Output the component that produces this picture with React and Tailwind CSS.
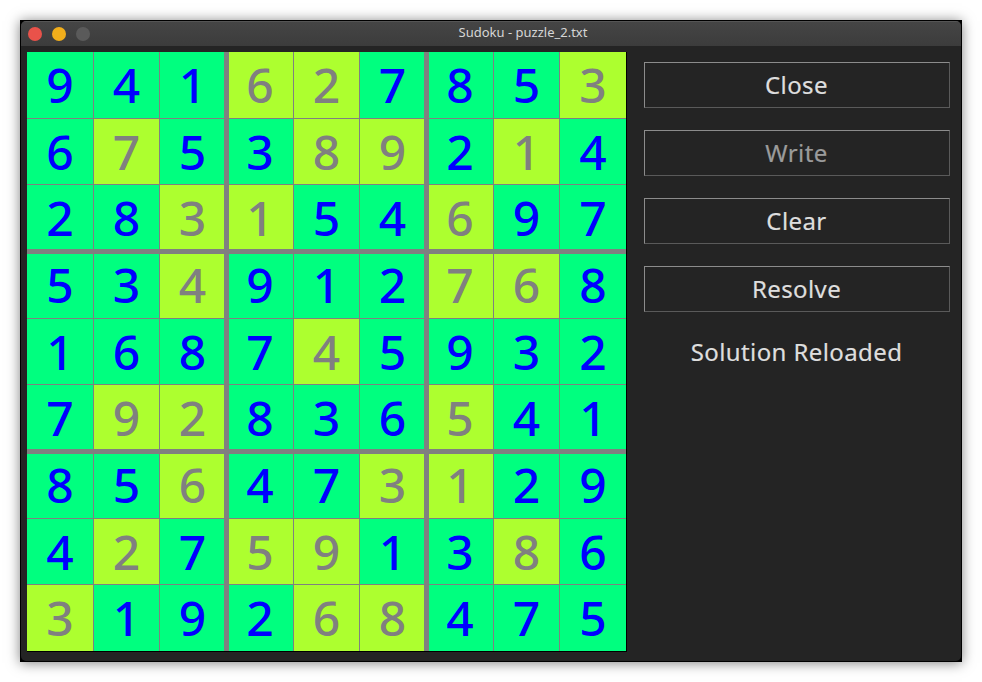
const ROWS = [
  ["941627853", "...ww...w"],
  ["675389214", ".w..ww.w."],
  ["283154697", "..ww..w.."],
  ["534912768", "..w...ww."],
  ["168745932", "....w...."],
  ["792836541", ".ww...w.."],
  ["856473129", "..w..ww.."],
  ["427591386", ".w.ww..w."],
  ["319268475", "w...ww..."],
];

const RIGHT = ["border-r", "border-r", "border-r-5 pl-px", "border-r pr-[2px]", "border-r", "border-r-5 pl-px", "border-r pr-[2px]", "border-r", ""];
const BOTTOM = ["border-b", "border-b", "border-b-5 pt-[2px]", "border-b pb-[2px]", "border-b", "border-b-5 pt-[2px]", "border-b pb-[2px]", "border-b", ""];

function Cell({ digit, solved, row, col }) {
  const tone = solved ? "bg-[#adff2f] text-[#808080]" : "bg-[#00ff7f] text-[#0000ff]";
  return (
    <div className={`flex items-center justify-center border-[#808080] text-[48px] leading-none font-medium ${tone} ${RIGHT[col]} ${BOTTOM[row]}`}>
      <span>{digit}</span>
    </div>
  );
}

function Action({ label, disabled }) {
  return (
    <button
      className={`flex h-[46px] w-full items-center justify-center border border-t-[#8c8c8c] border-r-[#5a5a5a] border-b-[#5a5a5a] border-l-[#8c8c8c] pr-px text-[24px] leading-none tracking-[0.4px] [-webkit-text-stroke-width:0.2px] ${disabled ? "text-[#9b9b9b]" : "text-[#dedede]"}`}
    >
      {label}
    </button>
  );
}

export default function App() {
  return (
    <div className="h-[682px] w-[982px] overflow-hidden bg-white p-5 font-['Noto_Sans',sans-serif]">
      <div className="h-[642px] w-[942px] bg-black p-px shadow-[0_1px_12px_rgba(0,0,0,0.5)]">
        <div className="flex h-[640px] w-[940px] flex-col overflow-hidden rounded-[5px] bg-[#242424]">
          <header className="flex h-[25px] shrink-0 items-center border-t border-[#555555] bg-linear-to-b from-[#454545] to-[#3c3c3c]">
            <div className="flex w-[90px] gap-2.5 pl-[7px]">
              <i className="size-3.5 rounded-full bg-[#e9524a]" />
              <i className="size-3.5 rounded-full bg-[#f1ae1b]" />
              <i className="size-3.5 rounded-full bg-[#5a5a5a]" />
            </div>
            <div className="flex-1 pr-[26px] pb-[3px] text-center text-[13px] leading-none text-[#d6d6d6]">Sudoku - puzzle_2.txt</div>
          </header>
          <main className="flex pt-1.5 pl-1.5">
            <div className="grid h-[600px] w-[600px] grid-cols-[67px_66px_69px_65px_66px_69px_65px_66px_66px] grid-rows-[67px_66px_69px_65px_66px_69px_65px_66px_66px] border-r border-b border-black">
              {ROWS.map(([digits, marks], row) =>
                [...digits].map((digit, col) => (
                  <Cell key={`${row}-${col}`} digit={digit} solved={marks[col] === "w"} row={row} col={col} />
                ))
              )}
            </div>
            <aside className="ml-[17px] flex w-[306px] flex-col gap-[22px] pt-2.5">
              <Action label="Close" />
              <Action label="Write" disabled />
              <Action label="Clear" />
              <Action label="Resolve" />
              <p className="pt-[6px] pr-px text-center text-[24px] leading-none tracking-[0.4px] text-[#dedede] [-webkit-text-stroke-width:0.2px]">Solution Reloaded</p>
            </aside>
          </main>
        </div>
      </div>
    </div>
  );
}
